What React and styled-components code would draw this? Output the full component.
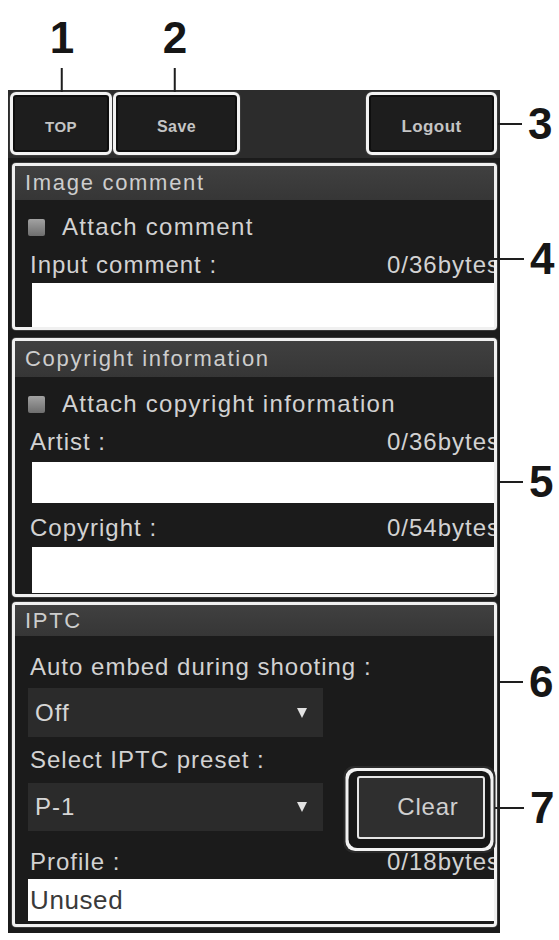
import styled, { createGlobalStyle } from 'styled-components';

const GlobalStyle = createGlobalStyle`
  html, body {
    margin: 0;
    padding: 0;
    background: #ffffff;
  }
  body {
    font-family: "Liberation Sans", Arial, sans-serif;
  }
`;

const Page = styled.div`
  width: 559px;
  height: 940px;
  padding: 90px 0 0 8px;
  box-sizing: border-box;
  overflow: hidden;
`;

const Screen = styled.div`
  position: relative;
  width: 492px;
`;

const TopBar = styled.div`
  display: flex;
  gap: 1px;
  height: 68px;
  box-sizing: border-box;
  padding: 2px 3px 3px 2px;
  background: #2c2c2c;
`;

const BarButton = styled.div`
  width: ${(p) => p.$w}px;
  box-sizing: border-box;
  display: flex;
  align-items: center;
  justify-content: center;
  padding-top: 6px;
  background: #1d1d1d;
  border: 3px solid #f2f2f2;
  border-radius: 6px;
  box-shadow: inset 0 0 0 2px #0e0e0e, 0 0 0 1px #3a3a3a;
  color: #c4c4c4;
  font-size: ${(p) => p.$fs || 16}px;
  font-weight: bold;
  letter-spacing: 0.4px;
`;

const Spacer = styled.div`
  flex: 1;
`;

const Body = styled.div`
  display: flex;
  flex-direction: column;
  background: #1b1b1b;
  padding: 5px 3px 6px 4px;
`;

const Section = styled.section`
  display: flex;
  flex-direction: column;
  margin-top: ${(p) => p.$mt || 0}px;
  padding-bottom: ${(p) => p.$pb || 0}px;
  border: 3px solid #f0f0f0;
  border-radius: 4px;
  box-shadow: 0 0 0 1px #3a3a3a;
  background: #1b1b1b;
`;

const SectionHead = styled.div`
  height: ${(p) => p.$h}px;
  display: flex;
  align-items: center;
  padding-left: 10px;
  background: linear-gradient(#404040, #363636);
  color: #cdcdcd;
  font-size: 22px;
  letter-spacing: 1.7px;
`;

const Row = styled.div`
  display: flex;
  align-items: center;
  justify-content: space-between;
  height: ${(p) => p.$h}px;
  box-sizing: border-box;
  margin-top: ${(p) => p.$mt || 0}px;
  padding-top: ${(p) => p.$pt || 0}px;
  padding-left: ${(p) => p.$pl || 15}px;
  overflow: hidden;
  white-space: nowrap;
  color: #d2d2d2;
  font-size: 24px;
  letter-spacing: 1px;
`;

const Count = styled.span`
  margin-right: -6px;
`;

const CheckBox = styled.span`
  width: 17px;
  height: 17px;
  margin-right: 17px;
  border-radius: 2px;
  background: linear-gradient(#a2a2a2, #6e6e6e);
`;

const CheckLabel = styled.span`
  flex: 1;
  letter-spacing: 1.3px;
`;

const TextField = styled.div`
  height: ${(p) => p.$h}px;
  margin: ${(p) => p.$mt || 0}px 0 0 ${(p) => p.$ml || 17}px;
  display: flex;
  align-items: center;
  padding-left: 2px;
  background: #ffffff;
  color: #3a3a3a;
  font-size: 26px;
  letter-spacing: 0.6px;
`;

const Select = styled.div`
  width: 295px;
  height: ${(p) => p.$h}px;
  margin: ${(p) => p.$mt || 0}px 0 0 13px;
  box-sizing: border-box;
  display: flex;
  align-items: center;
  justify-content: space-between;
  padding: 0 16px 0 7px;
  background: #2b2b2b;
  color: #d6d6d6;
  font-size: 24px;
  letter-spacing: 1px;
`;

const Caret = styled.span`
  width: 0;
  height: 0;
  border-left: 5px solid transparent;
  border-right: 5px solid transparent;
  border-top: 10px solid #e2e2e2;
`;

const PresetRow = styled.div`
  display: flex;
  align-items: center;
  height: 64px;
`;

const ClearButton = styled.div`
  position: relative;
  z-index: 2;
  width: 128px;
  height: 63px;
  margin-left: 34px;
  box-sizing: border-box;
  display: flex;
  align-items: center;
  justify-content: center;
  padding-left: 14px;
  background: #2f2f2f;
  border: 2px solid #e4e4e4;
  border-radius: 3px;
  box-shadow: -1.5px 2px 0 7px #161616, -1.5px 2px 0 10px #f2f2f2,
    -1.5px 2px 0 12px #2a2a2a;
  color: #cfcfcf;
  font-size: 24px;
  letter-spacing: 0.8px;
`;

const Callout = styled.div`
  position: absolute;
  left: ${(p) => p.$x}px;
  top: ${(p) => p.$y}px;
  display: flex;
  flex-direction: ${(p) => (p.$vertical ? 'column' : 'row')};
  align-items: center;
  transform: ${(p) => (p.$vertical ? 'translateX(-50%)' : 'translateY(-50%)')};
`;

const Leader = styled.span`
  width: ${(p) => (p.$vertical ? 2 : p.$len)}px;
  height: ${(p) => (p.$vertical ? p.$len : 2)}px;
  margin-top: ${(p) => (p.$vertical ? 8 : 0)}px;
  background: #1e1e1e;
`;

const Num = styled.span`
  margin-left: ${(p) => (p.$vertical ? 0 : 6)}px;
  color: #161616;
  font-family: "Liberation Sans", Arial, sans-serif;
  font-size: 44px;
  font-weight: bold;
  line-height: 1;
`;

const side = [
  { n: 3, x: 490, y: 34, len: 24 },
  { n: 4, x: 485, y: 169, len: 31 },
  { n: 5, x: 492, y: 392, len: 23 },
  { n: 6, x: 492, y: 592, len: 23 },
  { n: 7, x: 485, y: 718, len: 31 },
];

export default function App() {
  return (
    <Page>
      <GlobalStyle />
      <Screen>
        <TopBar>
          <BarButton $w={102} $fs={15}>TOP</BarButton>
          <BarButton $w={127}>Save</BarButton>
          <Spacer />
          <BarButton $w={131} $fs={17}>Logout</BarButton>
        </TopBar>

        <Body>
          <Section>
            <SectionHead $h={34}>Image comment</SectionHead>
            <Row $h={38} $mt={8} $pl={13}>
              <CheckBox />
              <CheckLabel>Attach comment</CheckLabel>
            </Row>
            <Row $h={37}>
              <span>Input comment :</span>
              <Count>0/36bytes</Count>
            </Row>
            <TextField $h={44} />
          </Section>

          <Section $mt={8} $pb={1}>
            <SectionHead $h={36}>Copyright information</SectionHead>
            <Row $h={38} $mt={8} $pl={13}>
              <CheckBox />
              <CheckLabel>Attach copyright information</CheckLabel>
            </Row>
            <Row $h={37}>
              <span>Artist :</span>
              <Count>0/36bytes</Count>
            </Row>
            <TextField $h={41} $mt={2} />
            <Row $h={38} $mt={6}>
              <span>Copyright :</span>
              <Count>0/54bytes</Count>
            </Row>
            <TextField $h={46} />
          </Section>

          <Section $mt={5} $pb={3}>
            <SectionHead $h={31}>IPTC</SectionHead>
            <Row $h={38} $mt={12}>
              <span>Auto embed during shooting :</span>
            </Row>
            <Select $h={49} $mt={2}>
              <span>Off</span>
              <Caret />
            </Select>
            <Row $h={30} $mt={8}>
              <span>Select IPTC preset :</span>
            </Row>
            <PresetRow>
              <Select $h={48}>
                <span>P-1</span>
                <Caret />
              </Select>
              <ClearButton>Clear</ClearButton>
            </PresetRow>
            <Row $h={40} $pt={6}>
              <span>Profile :</span>
              <Count>0/18bytes</Count>
            </Row>
            <TextField $h={42} $ml={13}>Unused</TextField>
          </Section>
        </Body>

        <Callout $vertical $x={54} $y={-74}>
          <Num $vertical>1</Num>
          <Leader $vertical $len={24} />
        </Callout>
        <Callout $vertical $x={167} $y={-74}>
          <Num $vertical>2</Num>
          <Leader $vertical $len={24} />
        </Callout>

        {side.map((c) => (
          <Callout key={c.n} $x={c.x} $y={c.y}>
            <Leader $len={c.len} />
            <Num>{c.n}</Num>
          </Callout>
        ))}
      </Screen>
    </Page>
  );
}
